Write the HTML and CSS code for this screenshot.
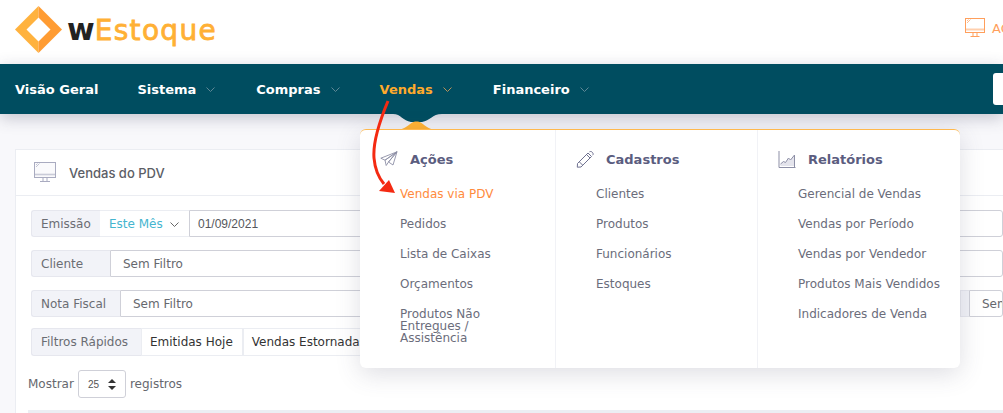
FILE: index.html
```html
<!DOCTYPE html>
<html lang="pt">
<head>
<meta charset="utf-8">
<title>wEstoque</title>
<link rel="stylesheet" href="styles.css">
</head>
<body>
<header class="topbar">
  <div class="brand">
    <svg class="logo" width="47" height="47" viewBox="0 0 47 47">
      <path d="M23.5 0L0 23.5L23.5 47V35.5L11.5 23.5L23.5 11.5Z" fill="#ffb23e"/>
      <path d="M23.5 0L47 23.5L23.5 47V35.5L35.5 23.5L23.5 11.5Z" fill="#ff9c33"/>
    </svg>
    <span class="brand-name"><span class="brand-w">w</span>Estoque</span>
  </div>
  <div class="account">
    <svg width="21" height="20" viewBox="0 0 21 20" fill="none" stroke="#ff9f5c" stroke-width="1">
      <rect x="0.5" y="0.5" width="19" height="14"/>
      <path d="M1 11.5H19" stroke-width="2" opacity=".5"/>
      <path d="M2 5L5.5 1.5M2 3L3.5 1.5" stroke-width="1" opacity=".7"/>
      <path d="M8 15V18M12 15V18M5.5 18.5H14.5"/>
    </svg>
    <span>AC</span>
  </div>
</header>
<nav class="navbar">
  <a class="nav-item nav-first">Visão Geral</a>
  <a class="nav-item">Sistema<svg class="chev" width="9" height="5" viewBox="0 0 9 5"><path d="M.5.5l4 4 4-4"/></svg></a>
  <a class="nav-item nav-compras">Compras<svg class="chev" width="9" height="5" viewBox="0 0 9 5"><path d="M.5.5l4 4 4-4"/></svg></a>
  <a class="nav-item is-active">Vendas<svg class="chev" width="9" height="5" viewBox="0 0 9 5"><path d="M.5.5l4 4 4-4"/></svg></a>
  <a class="nav-item nav-fin">Financeiro<svg class="chev" width="9" height="5" viewBox="0 0 9 5"><path d="M.5.5l4 4 4-4"/></svg></a>
  <div class="nav-box"></div>
</nav>
<main class="content">
  <section class="card">
    <div class="card-head">
      <svg width="23" height="21" viewBox="0 0 23 21" fill="none" stroke="#a9abc0" stroke-width="1">
        <rect x="0.5" y="0.5" width="21" height="15" fill="#fafafc"/>
        <path d="M1 12.5H21" stroke-width="1.6" opacity=".6"/>
        <path d="M2 5L5.500 1.500M2 3L3.500 1.500" opacity=".7"/>
        <path d="M9 16V19M13 16V19M6 19.500H16"/>
      </svg>
      <h2 class="card-title">Vendas do PDV</h2>
    </div>
    <div class="card-body">
      <div class="filters">
        <div class="filter-row">
          <span class="addon addon-emissao">Emissão</span>
          <span class="period">Este Mês<svg class="period-chev" width="9" height="5" viewBox="0 0 9 5"><path d="M.5.5l4 4 4-4"/></svg></span>
          <span class="field field-date">01/09/2021</span>
        </div>
        <div class="filter-row">
          <span class="addon addon-cliente">Cliente</span>
          <span class="field">Sem Filtro</span>
        </div>
        <div class="filter-row">
          <span class="addon addon-nota">Nota Fiscal</span>
          <span class="field">Sem Filtro</span>
          <span class="addon addon-hidden"></span>
          <span class="field field-clip">Sem Filtro</span>
        </div>
        <div class="filter-row filter-quick">
          <span class="addon addon-rapidos">Filtros Rápidos</span>
          <span class="quick">Emitidas Hoje</span>
          <span class="quick">Vendas Estornadas</span>
        </div>
      </div>
      <div class="length">
        <span>Mostrar</span>
        <span class="select">25<svg width="8" height="11" viewBox="0 0 8 11"><path d="M4 0L8 4H0ZM4 11L0 7H8Z" fill="#333"/></svg></span>
        <span>registros</span>
      </div>
      <div class="table-head"></div>
    </div>
  </section>
</main>

<svg class="notch" width="60" height="16" viewBox="0 0 60 16">
  <path d="M7 0C15 0 17 7 25 8H36C44 7 46 0 56 0Z" fill="#004d60"/>
  <path d="M14 15.500C21 14 25 8.500 28 7.800C29.500 7.400 31.500 7.400 33 7.800C36 8.500 40 14 47 15.500Z" fill="#ffb233"/>
</svg>

<div class="mega">
  <div class="mega-col col-acoes">
    <div class="mega-head">
      <svg class="mega-icon" width="18" height="16" viewBox="0 0 18 16" fill="none" stroke="#8d8fa6" stroke-width=".9">
        <path d="M17 .8L.8 7.200L5 9.200ZM17 .8L5 9.200L6.200 14.500L8.500 11ZM17 .8L8.500 11L13 14Z"/>
      </svg>
      <h3>Ações</h3>
    </div>
    <ul class="mega-list">
      <li class="is-current">Vendas via PDV</li>
      <li>Pedidos</li>
      <li>Lista de Caixas</li>
      <li>Orçamentos</li>
      <li>Produtos Não Entregues / Assistência</li>
    </ul>
  </div>
  <div class="mega-col col-cadastros">
    <div class="mega-head">
      <svg class="mega-icon" width="17" height="17" viewBox="0 0 17 17" fill="none" stroke="#6f7190" stroke-width="1">
        <path d="M1 12.500L11.500 2L15 5.500L4.500 16L.8 16.200ZM10 3.500L13.500 7M3 11L6 14M13 .8C14 .2 15.200 .5 16 1.500C16.800 2.500 16.800 3.500 16.200 4.200"/>
      </svg>
      <h3>Cadastros</h3>
    </div>
    <ul class="mega-list">
      <li>Clientes</li>
      <li>Produtos</li>
      <li>Funcionários</li>
      <li>Estoques</li>
    </ul>
  </div>
  <div class="mega-col col-relatorios">
    <div class="mega-head">
      <svg class="mega-icon" width="17" height="17" viewBox="0 0 17 17" fill="none" stroke="#8d8fa6" stroke-width="1">
        <path d="M.5 0V16.500H17"/>
        <path d="M2 13L5 10.500L7 11.500L10 7L12 9L16 4V15H2Z" fill="#e4e4ec" stroke="none"/>
        <path d="M2 13L5 10.500L7 11.500L10 7L12 9L16 4V16"/>
      </svg>
      <h3>Relatórios</h3>
    </div>
    <ul class="mega-list">
      <li>Gerencial de Vendas</li>
      <li>Vendas por Período</li>
      <li>Vendas por Vendedor</li>
      <li>Produtos Mais Vendidos</li>
      <li>Indicadores de Venda</li>
    </ul>
  </div>
</div>

<svg class="callout" width="40" height="105" viewBox="0 0 40 105" fill="none">
  <path d="M17 1C7 25 2 45 3 58C4 70 8 78 13 84" stroke="#f42a12" stroke-width="3"/>
  <path d="M24 93L8 91L18 80Z" fill="#f42a12"/>
</svg>
</body>
</html>
```
FILE: styles.css
```css
* { box-sizing: border-box; }
html, body { margin: 0; padding: 0; }
body {
  width: 1003px;
  height: 413px;
  overflow: hidden;
  position: relative;
  background: #f8f8fb;
  font-family: "DejaVu Sans", sans-serif;
  font-size: 12px;
  color: #666;
}
.topbar {
  height: 64px;
  background: #fff;
  display: flex;
  align-items: center;
  justify-content: space-between;
  padding: 0 0 0 15px;
  overflow: hidden;
}
.brand { display: flex; align-items: center; gap: 5px; margin-top: -5px; }
.logo { display: block; }
.brand-name {
  font-size: 28px;
  font-weight: 400;
  letter-spacing: 1.3px;
  color: #ffb035;
  -webkit-text-stroke: .8px #ffb035;
}
.brand-w { color: #222; font-weight: 700; font-size: 30px; -webkit-text-stroke: 0; letter-spacing: 0; }
.account {
  display: flex;
  align-items: center;
  gap: 6px;
  width: 38px;
  flex: none;
  color: #ff9f5c;
  font-size: 13px;
  overflow: hidden;
  margin-top: -8px;
  white-space: nowrap;
}
.account svg { flex: none; }
.navbar {
  height: 50px;
  background: #004d60;
  display: flex;
  align-items: center;
  padding-left: 15px;
  gap: 40px;
  position: relative;
  box-shadow: 0 4px 16px rgba(60, 60, 90, .28);
  z-index: 2;
}
.nav-item {
  color: #fff;
  font-weight: 700;
  font-size: 13px;
  display: flex;
  align-items: center;
  gap: 10px;
}
.nav-first { margin-right: -1px; }
.nav-compras { margin-left: 1px; }
.nav-fin { margin-left: 1px; }
.nav-item.is-active { color: #ffaa2b; }
.chev { fill: none; stroke: #5f8896; stroke-width: 1; margin-top: 1px; }
.is-active .chev { stroke: #b9935a; }
.nav-box {
  position: absolute;
  right: 0;
  top: 9px;
  width: 10px;
  height: 32px;
  background: #fff;
  border-radius: 3px 0 0 3px;
}
.content { padding: 35px 0 0 15px; }
.card {
  background: #fff;
  border: 1px solid #ebedf2;
  border-width: 1px 0 0 1px;
  height: 264px;
}
.card-head {
  height: 46px;
  border-bottom: 1px solid #ebedf2;
  display: flex;
  align-items: center;
  gap: 12px;
  padding-left: 18px;
}
.card-title {
  margin: 0;
  font: 500 13px Inter, sans-serif;
  color: #5c5e66;
}
.card-body { padding: 14px 0 0 12px; }
.filters {
  margin-left: 3px;
  display: flex;
  flex-direction: column;
  gap: 13px;
}
.filter-row {
  display: flex;
  height: 27px;
  align-items: stretch;
  line-height: 27px;
}
.filter-quick { height: 28px; margin-top: -2px; line-height: 26px; }
.addon {
  background: #f2f3f8;
  border: 1px solid #e6e7ee;
  border-right: 0;
  border-radius: 3px 0 0 3px;
  padding-left: 9px;
  color: #6b6d73;
  flex: none;
  line-height: 25px;
}
.filter-row:not(.filter-quick) .addon,
.filter-row:not(.filter-quick) .field,
.filter-row:not(.filter-quick) .period { line-height: 26px; }
.addon-emissao { width: 69px; }
.addon-cliente { width: 79px; }
.addon-nota { width: 89px; }
.addon-rapidos { width: 110px; line-height: 26px; }
.addon-hidden { width: 9px; padding: 0; border-radius: 0; }
.period {
  width: 89px;
  flex: none;
  border: 1px solid #ebedf2;
  border-width: 1px 0;
  padding-left: 9px;
  color: #45b5cf;
  white-space: nowrap;
}
.period-chev { fill: none; stroke: #666; stroke-width: 1; margin-left: 7px; vertical-align: 1px; }
.field {
  flex: 1;
  border: 1px solid #cfd0d8;
  border-radius: 0 3px 3px 0;
  background: #fff;
  padding-left: 12px;
  color: #66686e;
  white-space: nowrap;
  overflow: hidden;
}
.field-date {
  padding-left: 8px;
  font-family: "Liberation Sans", sans-serif;
  color: #55575c;
}
.field-clip { flex: none; width: 34px; padding-left: 12px; }
.quick {
  flex: none;
  border: 1px solid #ebedf2;
  padding: 0 9px 0 8px;
  color: #333;
  white-space: nowrap;
}
.length {
  margin-top: 14px;
  height: 28px;
  display: flex;
  align-items: center;
  gap: 4px;
  color: #66686e;
}
.select {
  width: 48px;
  height: 28px;
  border: 1px solid #cfd0d8;
  border-radius: 3px;
  font: 10px "Liberation Sans", sans-serif;
  color: #555;
  display: flex;
  align-items: center;
  justify-content: space-between;
  padding: 0 9px;
}
.table-head { margin-top: 12px; height: 3px; background: #eceef3; }

.notch {
  position: absolute;
  left: 386px;
  top: 114px;
  z-index: 3;
}
.mega {
  position: absolute;
  left: 360px;
  top: 129px;
  width: 600px;
  height: 239px;
  background: #fff;
  border-top: 1.5px solid #ffb84d;
  border-radius: 6px;
  box-shadow: 0 6px 24px rgba(70, 70, 100, .18);
  display: flex;
  z-index: 4;
}
.mega-col { border-right: 1px solid #f1f2f6; padding-top: 20px; }
.col-acoes { width: 196px; padding-left: 20px; }
.col-cadastros { width: 202px; padding-left: 20px; }
.col-relatorios { flex: 1; padding-left: 20px; border-right: 0; }
.mega-head { display: flex; align-items: center; height: 18px; }
.mega-icon { flex: none; width: 18px; }
.mega-head h3 {
  margin: 0 0 0 12px;
  font-size: 13px;
  font-weight: 700;
  color: #5b5d7f;
}
.mega-list {
  list-style: none;
  margin: 20px 0 0;
  padding: 0 0 0 20px;
  color: #6b6d7b;
  line-height: 12px;
}
.mega-list li { margin-bottom: 18px; }
.mega-list .is-current { color: #ff8b3d; }
.col-acoes .mega-list { width: 130px; }
.callout {
  position: absolute;
  left: 371px;
  top: 100px;
  z-index: 5;
}
```
